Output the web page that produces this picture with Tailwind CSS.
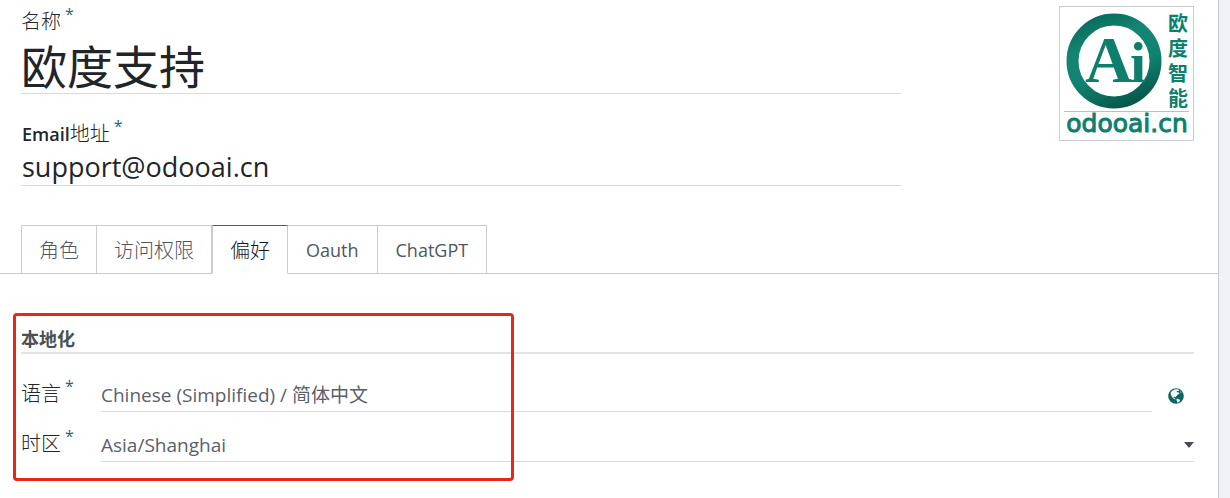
<!DOCTYPE html>
<html lang="zh-CN">
<head>
<meta charset="utf-8">
<meta name="viewport" content="width=device-width, initial-scale=1">
<title>欧度支持</title>
<script src="https://cdn.jsdelivr.net/npm/@tailwindcss/browser@4"></script>
</head>
<body class="min-h-screen bg-[#f0f2f7] pr-[11px] font-['Open_Sans','Noto_Sans_CJK_SC',sans-serif] text-[18px] text-[#212529]">
<main class="min-h-screen border-r border-[#c5cad2] bg-white pt-1.5 pb-4">
  <header class="grid grid-cols-[3fr_1fr] pr-6 pl-[21px]">
    <div>
      <label for="name" class="flex h-8 items-center gap-1 text-[20px] font-light">名称<sup class="top-0 self-start text-[16px] leading-4 font-normal text-[#17697a]">*</sup></label>
      <input id="name" value="欧度支持" class="block h-14 w-full border-b border-[#d8dadd] pb-1 text-[46px] leading-none outline-none">
      <label for="email" class="mt-6 flex h-8 items-center gap-1 pl-px font-semibold"><span>Email<span class="text-[20px] font-light">地址</span></span><sup class="top-0 self-start text-[16px] leading-4 font-normal text-[#17697a]">*</sup></label>
      <input id="email" type="email" value="support@odooai.cn" class="block h-9 w-full border-b border-[#d8dadd] pb-0.5 pl-px text-[27px] leading-none outline-none">
    </div>
    <svg class="h-[135px] w-[135px] justify-self-end border border-[#c9ccd2]" viewBox="0 0 133 133" role="img" aria-label="欧度智能 odooai.cn">
      <defs><linearGradient id="ring" x1="0.3" y1="0" x2="0.7" y2="1"><stop offset="0" stop-color="#0a6f5f"/><stop offset="0.25" stop-color="#148572"/><stop offset="0.6" stop-color="#108370"/><stop offset="1" stop-color="#07594c"/></linearGradient></defs>
      <circle cx="54" cy="54" r="41.5" fill="none" stroke="url(#ring)" stroke-width="12"/>
      <g fill="#0d7f6c">
        <g font-family="Liberation Serif, serif" font-weight="700"><text x="25" y="75" font-size="66">A</text><text x="70" y="75" font-size="58">i</text></g>
        <g font-family="Noto Sans CJK SC, sans-serif" font-weight="700" font-size="20" text-anchor="middle"><text x="118" y="24">欧</text><text x="118" y="49">度</text><text x="118" y="74">智</text><text x="118" y="99">能</text></g>
        <text x="67" y="125" text-anchor="middle" font-family="DejaVu Sans, sans-serif" font-size="25" stroke="#0d7f6c">odooai.cn</text>
      </g>
      <path d="M4 104.500H129" stroke="#b9bfc2"/>
    </svg>
  </header>

  <nav role="tablist" class="mt-[39px] flex h-[49px] border-b border-[#c9cccf] pl-[21px] text-[#4f5562]">
    <button role="tab" class="h-[49px] border border-[#c9cccf] px-[17px] pt-0.5 text-[20px] font-light">角色</button>
    <button role="tab" class="h-[49px] border border-l-0 border-[#c9cccf] px-[17px] pt-0.5 text-[20px] font-light">访问权限</button>
    <button role="tab" aria-selected="true" class="h-[49px] border border-x-[#c9cccf] border-t-[#0a8075] border-b-white px-[17px] pt-0.5 text-[20px] font-light text-[#111827]">偏好</button>
    <button role="tab" class="h-[49px] border border-l-0 border-[#c9cccf] px-[18px] pt-0.5">Oauth</button>
    <button role="tab" class="h-[49px] border border-l-0 border-[#c9cccf] px-[18px] pt-0.5">ChatGPT</button>
  </nav>

  <section class="relative pt-[51px] pr-6 pl-[21px]">
    <h2 class="h-[29px] border-b-2 border-[#e3e4e7] text-[18px] leading-7 font-bold text-[#495057]">本地化</h2>
    <div class="mt-[22px] grid grid-cols-[80px_1fr]">
      <label for="lang" class="flex h-9 gap-1 text-[20px] leading-9 font-light">语言<sup class="top-0 text-[16px] leading-5 font-normal text-[#17697a]">*</sup></label>
      <div class="flex items-center">
        <select id="lang" class="h-9 flex-1 appearance-none border-b border-[#d8dadd] pt-1 text-[19px] text-[#5a606c] outline-none"><option>Chinese (Simplified) / 简体中文</option></select>
        <button aria-label="翻译" class="flex w-[42px] justify-center pt-1 pl-[6px]">
          <svg class="size-4" viewBox="0 0 16 16"><circle cx="8" cy="8" r="7.800" fill="#0b6660"/><path fill="#fff" d="M3.600 3.200 6.300 1.500 9.600 1.300 11.300 2.300 10.500 3.300 9.300 2.800 8.400 3.900 10.600 4.400 11.600 5.600 9.900 6.400 8.700 7.800 7.300 9.200 6 8.700 5.400 9.700 6.900 10.300 7.500 11.400 5.900 11.100 4.100 9 2.900 6.700 2.600 4.700ZM8.300 10.800 10.300 10.900 12.200 12 11.500 13.600 9.500 14.800 8.900 13.200ZM12.200 2.900 13.700 4.500 12.600 4.700Z"/></svg>
        </button>
      </div>
    </div>
    <div class="mt-3.5 grid grid-cols-[80px_1fr]">
      <label for="tz" class="flex h-9 gap-1 text-[20px] leading-9 font-light">时区<sup class="top-0 text-[16px] leading-5 font-normal text-[#17697a]">*</sup></label>
      <div class="relative">
        <select id="tz" class="h-9 w-full appearance-none border-b border-[#d8dadd] pt-1 text-[19px] text-[#5a606c] outline-none"><option>Asia/Shanghai</option></select>
        <svg class="pointer-events-none absolute top-4 right-0 h-1.5 w-2.5" viewBox="0 0 10 6"><path fill="#494c57" d="M0 0H10L5 6Z"/></svg>
      </div>
    </div>
    <div class="pointer-events-none absolute top-[39px] left-[13px] h-[168px] w-[501px] rounded-sm border-3 border-[#e6261f]"></div>
  </section>
</main>
</body>
</html>
